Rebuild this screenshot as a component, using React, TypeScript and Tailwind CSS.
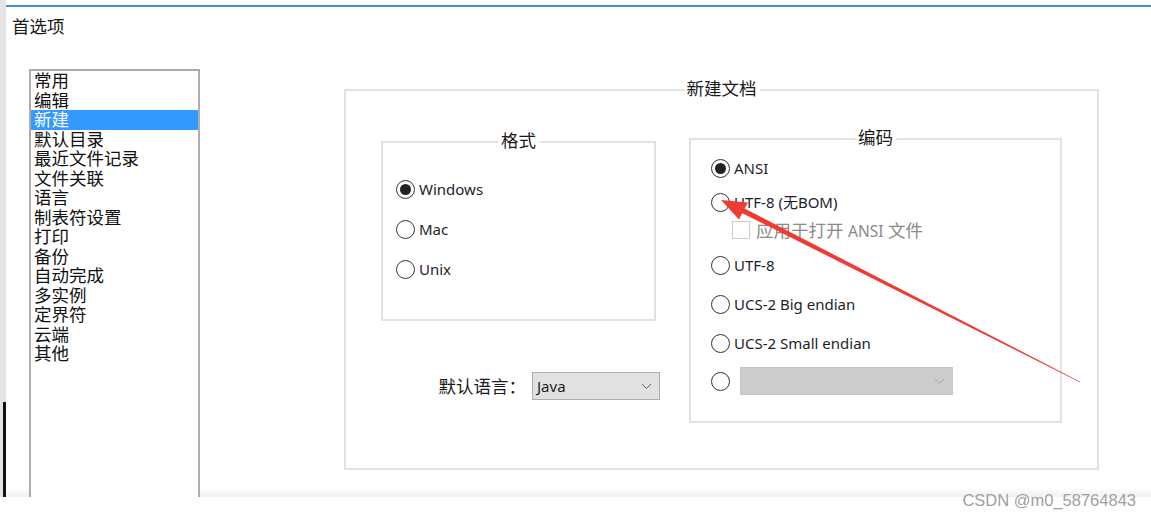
import React from 'react';

const sans = { fontFamily: '"Noto Sans", "Noto Sans CJK SC", sans-serif' };

const categories = [
  '常用', '编辑', '新建', '默认目录', '最近文件记录', '文件关联', '语言', '制表符设置',
  '打印', '备份', '自动完成', '多实例', '定界符', '云端', '其他',
];

function Radio({checked}: {checked?: boolean}) {
  return (
    <span className="w-[19px] h-[19px] shrink-0 rounded-full border-[1.5px] border-[#333] bg-white flex items-center justify-center">
      {checked && <span className="w-[11px] h-[11px] rounded-full bg-[#222]" />}
    </span>
  );
}

function RadioRow({label, checked, className}: {label: string; checked?: boolean; className?: string}) {
  return (
    <div className={"flex items-center h-[20px] gap-[4px] " + (className ?? "")}>
      <Radio checked={checked} />
      <span className="text-[15px] leading-[20px] text-[#1e1e2a] whitespace-nowrap">{label}</span>
    </div>
  );
}

function Chevron({color}: {color: string}) {
  return (
    <svg width="11" height="7" viewBox="0 0 11 7" fill="none">
      <path d="M1 1l4.5 4.5L10 1" stroke={color} strokeWidth="1" />
    </svg>
  );
}

function GroupBox({title, className, children}: {title: string; className: string; children?: React.ReactNode}) {
  return (
    <div className={"relative border-2 border-[#e2e2e2] " + className}>
      <span className="absolute left-1/2 -translate-x-1/2 -top-[15px] bg-white px-[3px] text-[17.5px] leading-[24px] text-[#1a1a1a] whitespace-nowrap">
        {title}
      </span>
      {children}
    </div>
  );
}

export default function App() {
  return (
    <div className="relative w-[1151px] h-[518px] bg-white overflow-hidden text-[#1a1a1a]" style={sans}>
      <div className="flex h-[497px]">
        <div className="w-[6px] flex flex-col">
          <div className="flex-1 bg-[#e4e4e4]" />
          <div className="h-[95px] bg-[#e4e4e4] pl-[3px]">
            <div className="h-full bg-[#121212]" />
          </div>
        </div>

        <div className="flex-1 flex flex-col pt-[5px] bg-[linear-gradient(to_bottom,#ffffff_calc(100%-9px),#f0f0f0)]">
          <div className="h-[2px] bg-[#3d8fd9]" />
          <div className="pl-[6px] mt-[7px] text-[17.5px] leading-[24px]">首选项</div>

          <div className="flex flex-1 items-start mt-[31px]">
            <ul className="ml-[23px] w-[171px] self-stretch border-2 border-b-0 border-[#acacac] bg-white">
              {categories.map(c => (
                <li
                  key={c}
                  className={"px-[3px] text-[17.5px] leading-[19.5px] " + (c === '新建' ? "bg-[#3399ff] text-white" : "text-[#111]")}
                >
                  {c}
                </li>
              ))}
            </ul>

            <GroupBox title="新建文档" className="ml-[144px] mt-[20px] w-[755px] h-[381px]">
              <div className="flex pl-[35px] pt-[47px]">
                <div className="w-[279px] flex flex-col">
                  <GroupBox title="格式" className="mt-[3px] w-[275px] h-[180px]">
                    <div className="flex flex-col pl-[13px] pt-[36px] gap-[20px]">
                      <RadioRow label="Windows" checked />
                      <RadioRow label="Mac" />
                      <RadioRow label="Unix" />
                    </div>
                  </GroupBox>

                  <div className="mt-[51px] flex justify-end items-center h-[28px]">
                    <span className="text-[17.5px] leading-[24px] mr-[6px]">默认语言：</span>
                    <div className="w-[128px] h-[28px] border border-[#adadad] bg-[#e1e1e1] flex items-center justify-between pl-[4px] pr-[7px]">
                      <span className="text-[15px] leading-[20px] text-[#1e1e2a]">Java</span>
                      <Chevron color="#606060" />
                    </div>
                  </div>
                </div>

                <GroupBox title="编码" className="ml-[29px] w-[373px] h-[285px]">
                  <div className="flex flex-col pl-[20px] pt-[18px]">
                    <RadioRow label="ANSI" checked />
                    <RadioRow label="UTF-8 (无BOM)" className="mt-[14px]" />
                    <div className="mt-[9px] ml-[21px] flex items-center h-[18px] gap-[6px]">
                      <span className="w-[18px] h-[18px] border border-[#cccccc] bg-white" />
                      <span className="text-[17.5px] leading-[22px] text-[#8a8a8a] whitespace-nowrap">
                        应用于打开 <span className="text-[15.5px]">ANSI</span> 文件
                      </span>
                    </div>
                    <RadioRow label="UTF-8" className="mt-[16px]" />
                    <RadioRow label="UCS-2 Big endian" className="mt-[19px]" />
                    <RadioRow label="UCS-2 Small endian" className="mt-[19px]" />
                    <div className="mt-[14px] flex items-center gap-[10px]">
                      <Radio />
                      <div className="w-[213px] h-[28px] border border-[#c6c6c6] bg-[#cccccc] flex items-center justify-end pr-[7px]">
                        <Chevron color="#a8a8a8" />
                      </div>
                    </div>
                  </div>
                </GroupBox>
              </div>
            </GroupBox>
          </div>
        </div>
      </div>

      <svg className="absolute inset-0 pointer-events-none" width="1151" height="518" viewBox="0 0 1151 518">
        <polygon
          points="721,200 748,202.5 744.6,208.6 1080.2,381.7 1079.8,382.3 742.2,213.2 739,219.5"
          fill="#ee3b33"
        />
      </svg>

      <div
        className="absolute right-[15px] top-[490px] text-[16.5px] leading-[20px] text-[#a0a0a0]"
        style={{fontFamily: '"Liberation Sans", Arial, sans-serif'}}
      >
        CSDN @m0_58764843
      </div>
    </div>
  );
}
